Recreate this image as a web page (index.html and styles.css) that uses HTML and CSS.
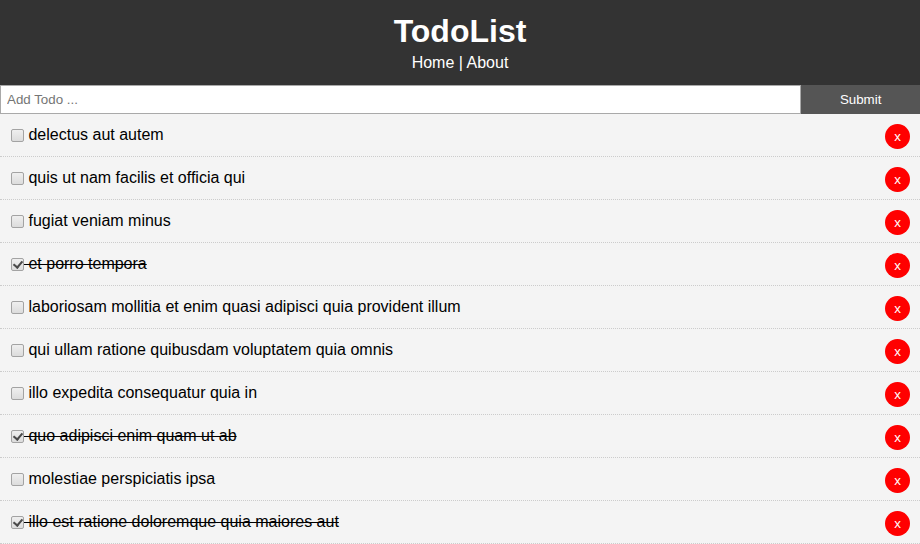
FILE: index.html
```html
<!DOCTYPE html>
<html>
<head>
<meta charset="utf-8">
<title>TodoList</title>
<link rel="stylesheet" href="styles.css">
</head>
<body>
<div class="app">
  <header class="header">
    <h1>TodoList</h1>
    <a href="#" class="link">Home</a> | <a href="#" class="link">About</a>
  </header>
  <form class="add-form">
    <input type="text" name="title" class="add-input" placeholder="Add Todo ...">
    <input type="submit" value="Submit" class="btn">
  </form>
  <div class="item"><p><input type="checkbox" class="check"> delectus aut autem <button type="button" class="del">x</button></p></div>
  <div class="item"><p><input type="checkbox" class="check"> quis ut nam facilis et officia qui <button type="button" class="del">x</button></p></div>
  <div class="item"><p><input type="checkbox" class="check"> fugiat veniam minus <button type="button" class="del">x</button></p></div>
  <div class="item done"><p><input type="checkbox" class="check" checked> et porro tempora <button type="button" class="del">x</button></p></div>
  <div class="item"><p><input type="checkbox" class="check"> laboriosam mollitia et enim quasi adipisci quia provident illum <button type="button" class="del">x</button></p></div>
  <div class="item"><p><input type="checkbox" class="check"> qui ullam ratione quibusdam voluptatem quia omnis <button type="button" class="del">x</button></p></div>
  <div class="item"><p><input type="checkbox" class="check"> illo expedita consequatur quia in <button type="button" class="del">x</button></p></div>
  <div class="item done"><p><input type="checkbox" class="check" checked> quo adipisci enim quam ut ab <button type="button" class="del">x</button></p></div>
  <div class="item"><p><input type="checkbox" class="check"> molestiae perspiciatis ipsa <button type="button" class="del">x</button></p></div>
  <div class="item done"><p><input type="checkbox" class="check" checked> illo est ratione doloremque quia maiores aut <button type="button" class="del">x</button></p></div>
</div>
</body>
</html>
```
FILE: styles.css
```css
* {
  box-sizing: border-box;
  margin: 0;
  padding: 0;
}
body {
  font-family: "Liberation Sans", Arial, sans-serif;
  line-height: 22px;
}
.header {
  background: #333;
  color: #fff;
  text-align: center;
  padding: 10px 10px 11px;
}
.header h1 {
  font-size: 2em;
  line-height: 42px;
}
.link {
  color: #fff;
  text-decoration: none;
}
.add-form {
  display: flex;
  height: 29px;
}
.add-input {
  flex: 10;
  padding: 5px 6px;
  border: 1px solid #a9a9a9;
  font-family: "Liberation Sans", Arial, sans-serif;
  font-size: 13.33px;
  color: #000;
}
.add-input::placeholder {
  color: #757575;
}
.btn {
  flex: 1;
  display: inline-block;
  border: none;
  background: #555;
  color: #fff;
  padding: 7px 20px;
  cursor: pointer;
  font-family: "Liberation Sans", Arial, sans-serif;
  font-size: 13.33px;
}
.item {
  background: #f4f4f4;
  padding: 10px;
  border-bottom: 1px #ccc dotted;
}
.done p {
  text-decoration: line-through;
}
.check {
  appearance: none;
  -webkit-appearance: none;
  display: inline-block;
  position: relative;
  width: 13px;
  height: 13px;
  margin-left: 1px;
  border: 1px solid #a3a3a3;
  border-radius: 2px;
  background: linear-gradient(#efefef, #dcdcdc);
  vertical-align: -2px;
}
.check:checked::after {
  content: "";
  position: absolute;
  left: 3px;
  top: 0px;
  width: 4px;
  height: 7px;
  border: solid #4a4a4a;
  border-width: 0 2px 2px 0;
  transform: rotate(40deg);
}
.del {
  background: #ff0000;
  color: #fff;
  border: none;
  padding: 5px 9px;
  border-radius: 50%;
  cursor: pointer;
  float: right;
  font-family: "Liberation Sans", Arial, sans-serif;
  font-size: 13.33px;
}
```
